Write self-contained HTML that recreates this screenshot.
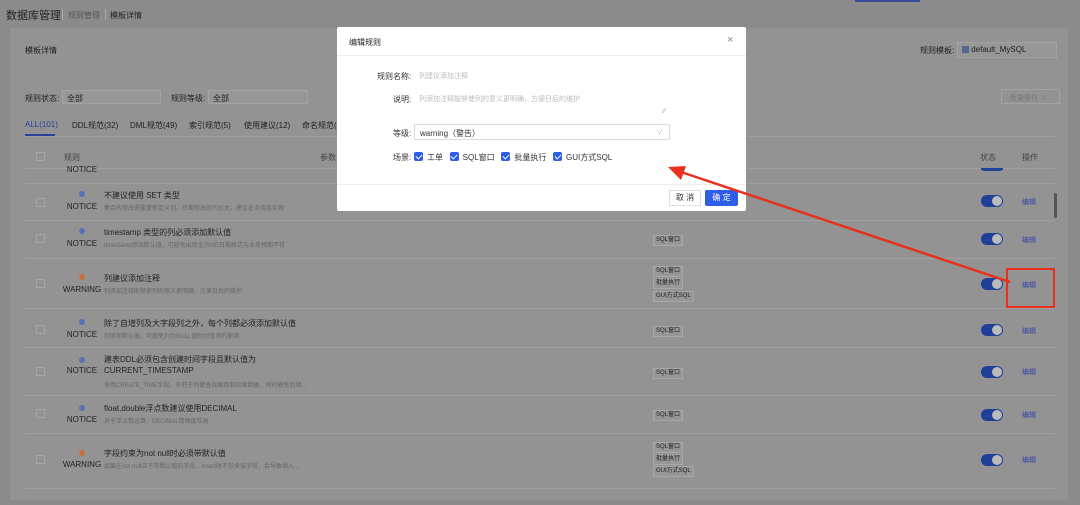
<!DOCTYPE html><html><head><meta charset="utf-8"><style>
*{box-sizing:border-box;margin:0;padding:0}
body{width:1080px;height:505px;overflow:hidden;background:#8b8b8b;font-family:"Liberation Sans","Noto Sans CJK SC",sans-serif;color:#1e1e1e;position:relative;font-size:8px}
.a{position:absolute;white-space:nowrap}
.card{position:absolute;left:10px;top:28px;width:1058px;height:472px;background:#939393}
.sel{position:absolute;height:14px;border:1px solid #a3a3a3;background:#979797;font-size:8px;padding:2px 4px}
.line{position:absolute;left:25px;width:1030px;height:1px;background:#a0a0a0}
.cb{position:absolute;width:9px;height:9px;border:1px solid #a5a5a5;left:36px}
.dot{position:absolute;width:6px;height:6px;border-radius:50%;left:79px}
.lv{position:absolute;font-size:8px;color:#222;width:46px;left:59px;text-align:center}
.t{position:absolute;left:104px;font-size:8px;color:#222}
.d{position:absolute;left:104px;font-size:6px;color:#666}
.tog{position:absolute;left:981px;width:22px;height:12px;border-radius:6px;background:#1f3f98}
.tog:after{content:"";position:absolute;right:1px;top:1px;width:10px;height:10px;border-radius:50%;background:#bbb}
.ed{position:absolute;left:1022px;font-size:7px;color:#3344aa}
.tag{position:absolute;left:653px;font-size:6px;border:1px solid #a8a8a8;padding:0 2px;background:#979797;line-height:9px}
.modal{position:absolute;left:337px;top:27px;width:409px;height:184px;background:#fff;border-radius:2px}
.ck{display:inline-block;width:9px;height:9px;background:#2e5ee8;border-radius:2px;vertical-align:-1px;margin-right:4px;position:relative}
.ck:after{content:"";position:absolute;left:2.5px;top:0.5px;width:3px;height:5px;border:solid #fff;border-width:0 1.3px 1.3px 0;transform:rotate(45deg)}
</style></head><body>
<div class="a" style="left:6px;top:7px;font-size:11px;color:#222">数据库管理</div>
<div class="a" style="left:62px;top:9px;width:1px;height:11px;background:#aaa"></div>
<div class="a" style="left:68px;top:10px;font-size:8px;color:#555">规则管理</div>
<div class="a" style="left:105px;top:9px;width:1px;height:11px;background:#aaa"></div>
<div class="a" style="left:110px;top:10px;font-size:8px;color:#222">模板详情</div>
<div class="a" style="left:855px;top:0;width:65px;height:2px;background:#3a4a9a"></div>
<div class="card"></div>
<div class="a" style="left:25px;top:45px;font-size:8px">模板详情</div>
<div class="a" style="left:920px;top:45px;font-size:8px">规则模板:</div>
<div class="sel" style="left:957px;top:42px;width:100px;height:16px"><span style="display:inline-block;width:7px;height:7px;background:#556688;vertical-align:-1px"></span> default_MySQL</div>
<div class="a" style="left:1001px;top:89px;width:59px;height:15px;border:1px solid #a3a3a3;font-size:7px;color:#777;padding:3px 8px">批量操作 ∨</div>
<div class="a" style="left:25px;top:93px;font-size:8px">规则状态:</div>
<div class="sel" style="left:62px;top:90px;width:99px">全部</div>
<div class="a" style="left:171px;top:93px;font-size:8px">规则等级:</div>
<div class="sel" style="left:208px;top:90px;width:100px">全部</div>
<div class="a" style="left:25px;top:120px;font-size:8px;color:#2c3f9a">ALL(101)</div>
<div class="a" style="left:25px;top:134px;width:30px;height:1.5px;background:#2c3f9a"></div>
<div class="a" style="left:72px;top:120px;font-size:8px">DDL规范(32)</div>
<div class="a" style="left:130px;top:120px;font-size:8px">DML规范(49)</div>
<div class="a" style="left:189px;top:120px;font-size:8px">索引规范(5)</div>
<div class="a" style="left:244px;top:120px;font-size:8px">使用建议(12)</div>
<div class="a" style="left:302px;top:120px;font-size:8px">命名规范(3</div>
<div class="line" style="top:136px"></div>
<div class="cb" style="top:152px"></div>
<div class="a" style="left:64px;top:152px;font-size:8px;color:#444">规则</div>
<div class="a" style="left:320px;top:152px;font-size:8px;color:#444">参数</div>
<div class="a" style="left:980px;top:152px;font-size:8px;color:#444">状态</div>
<div class="a" style="left:1022px;top:152px;font-size:8px;color:#444">操作</div>
<div class="line" style="top:168px"></div>
<div class="lv" style="top:165px">NOTICE</div>
<div class="line" style="top:183px"></div>
<div class="a" style="left:981px;top:168px;width:22px;height:3px;border-radius:0 0 4px 4px;background:#1f3f98"></div>

<div class="cb" style="top:198px"></div><div class="dot" style="top:191px;background:#5870b8"></div><div class="lv" style="top:202px">NOTICE</div>
<div class="t" style="top:190px">不建议使用 SET 类型</div><div class="d" style="top:203px">集合的修改需要重新定义列，后期修改的代价大，建议在业务层实现</div>
<div class="tog" style="top:195px"></div><div class="ed" style="top:197px">编辑</div>
<div class="line" style="top:220px"></div>

<div class="cb" style="top:234px"></div><div class="dot" style="top:228px;background:#5870b8"></div><div class="lv" style="top:239px">NOTICE</div>
<div class="t" style="top:227px">timestamp 类型的列必须添加默认值</div><div class="d" style="top:240px">timestamp添加默认值，可避免出现全为0的日期格式与业务预期不符</div>
<div class="tag" style="top:235px">SQL窗口</div><div class="a" style="left:720px;top:235px;font-size:6px;color:#999">✓</div>
<div class="tog" style="top:233px"></div><div class="ed" style="top:235px">编辑</div>
<div class="line" style="top:258px"></div>

<div class="cb" style="top:279px"></div><div class="dot" style="top:274px;background:#c8703a"></div><div class="lv" style="top:285px">WARNING</div>
<div class="t" style="top:273px">列建议添加注释</div><div class="d" style="top:286px">列添加注释能够使列的意义更明确，方便日后的维护</div>
<div class="tag" style="top:266px">SQL窗口</div><div class="tag" style="top:278px">批量执行</div><div class="tag" style="top:291px">GUI方式SQL</div>
<div class="a" style="left:720px;top:281px;font-size:6px;color:#999">✓</div>
<div class="tog" style="top:278px"></div><div class="ed" style="top:280px">编辑</div>
<div class="line" style="top:308px"></div>

<div class="cb" style="top:325px"></div><div class="dot" style="top:319px;background:#5870b8"></div><div class="lv" style="top:330px">NOTICE</div>
<div class="t" style="top:318px">除了自增列及大字段列之外，每个列都必须添加默认值</div><div class="d" style="top:331px">列添加默认值，可避免列为NULL值时对查询的影响</div>
<div class="tag" style="top:326px">SQL窗口</div>
<div class="tog" style="top:324px"></div><div class="ed" style="top:326px">编辑</div>
<div class="line" style="top:347px"></div>

<div class="cb" style="top:367px"></div><div class="dot" style="top:357px;background:#5870b8"></div><div class="lv" style="top:366px">NOTICE</div>
<div class="t" style="top:354px">建表DDL必须包含创建时间字段且默认值为</div><div class="t" style="top:366px">CURRENT_TIMESTAMP</div><div class="d" style="top:380px">使用CREATE_TIME字段，有利于问题查找跟踪和检索数据，同时避免后期...</div>
<div class="tag" style="top:368px">SQL窗口</div>
<div class="tog" style="top:366px"></div><div class="ed" style="top:367px">编辑</div>
<div class="line" style="top:395px"></div>

<div class="cb" style="top:409px"></div><div class="dot" style="top:405px;background:#5870b8"></div><div class="lv" style="top:415px">NOTICE</div>
<div class="t" style="top:403px">float,double浮点数建议使用DECIMAL</div><div class="d" style="top:416px">对于浮点数运算，DECIMAL精确度较高</div>
<div class="tag" style="top:410px">SQL窗口</div>
<div class="tog" style="top:409px"></div><div class="ed" style="top:410px">编辑</div>
<div class="line" style="top:433px"></div>

<div class="cb" style="top:455px"></div><div class="dot" style="top:450px;background:#c8703a"></div><div class="lv" style="top:460px">WARNING</div>
<div class="t" style="top:448px">字段约束为not null时必须带默认值</div><div class="d" style="top:461px">如果在not null且不带默认值的字段，insert时不包含该字段，会导致插入...</div>
<div class="tag" style="top:442px">SQL窗口</div><div class="tag" style="top:454px">批量执行</div><div class="tag" style="top:466px">GUI方式SQL</div>
<div class="tog" style="top:454px"></div><div class="ed" style="top:455px">编辑</div>
<div class="line" style="top:488px"></div>
<div class="a" style="left:1054px;top:193px;width:3px;height:25px;background:#555;border-radius:2px"></div>

<div class="modal">
<div class="a" style="left:12px;top:10px;font-size:8px;color:#222">编辑规则</div>
<div class="a" style="left:390px;top:7px;font-size:11px;color:#888">×</div>
<div class="a" style="left:0;top:28px;width:409px;height:1px;background:#eee"></div>
<div class="a" style="left:40px;top:44px;font-size:8px;color:#333">规则名称:</div>
<div class="a" style="left:82px;top:44px;font-size:7px;color:#bbb">列建议添加注释</div>
<div class="a" style="left:56px;top:67px;font-size:8px;color:#333">说明:</div>
<div class="a" style="left:82px;top:67px;font-size:7px;color:#bbb">列添加注释能够使列的意义更明确，方便日后的维护</div>
<div class="a" style="left:326px;top:82px;font-size:6px;color:#999">⁄⁄</div>
<div class="a" style="left:56px;top:101px;font-size:8px;color:#333">等级:</div>
<div class="a" style="left:77px;top:97px;width:256px;height:16px;border:1px solid #ddd;font-size:8px;padding:3px 5px;color:#333">warning（警告）<span style="position:absolute;right:6px;top:2px;color:#bbb;font-size:7px">∨</span></div>
<div class="a" style="left:56px;top:125px;font-size:8px;color:#333">场景:</div>
<div class="a" style="left:77px;top:125px;font-size:8px;color:#333"><span class="ck"></span>工单&nbsp;&nbsp;&nbsp;<span class="ck"></span>SQL窗口&nbsp;&nbsp;&nbsp;<span class="ck"></span>批量执行&nbsp;&nbsp;&nbsp;<span class="ck"></span>GUI方式SQL</div>
<div class="a" style="left:0;top:157px;width:409px;height:1px;background:#eee"></div>
<div class="a" style="left:332px;top:163px;width:32px;height:16px;border:1px solid #ddd;font-size:8px;text-align:center;line-height:14px;color:#333">取 消</div>
<div class="a" style="left:368px;top:163px;width:33px;height:16px;background:#2e5ee8;border-radius:2px;font-size:8px;text-align:center;line-height:16px;color:#fff">确 定</div>
</div>
<svg class="a" style="left:0;top:0" width="1080" height="505"><line x1="1010" y1="282" x2="675" y2="170" stroke="#e8301e" stroke-width="2.5"/><polygon points="668,167 686,166 681,180" fill="#e8301e"/><rect x="1007" y="269" width="47" height="38" fill="none" stroke="#e8301e" stroke-width="2"/></svg>
</body></html>
